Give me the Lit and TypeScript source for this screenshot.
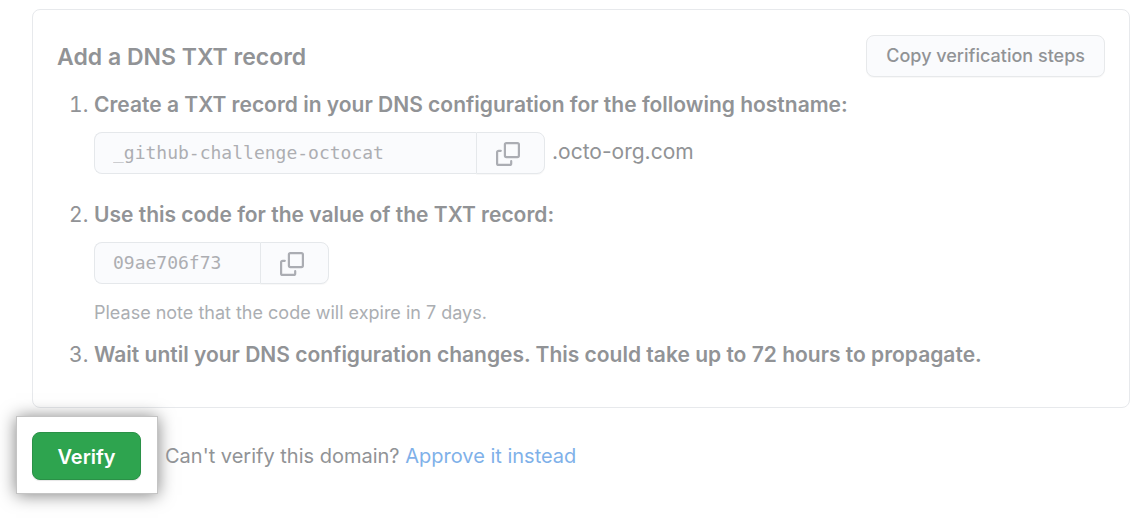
import { LitElement, html, css } from "lit";
import { customElement } from "lit/decorators.js";

const copyIcon = html`<svg class="icon" viewBox="0 0 24 24" fill="none" stroke="currentColor" stroke-width="2.2" stroke-linecap="round" stroke-linejoin="round" aria-hidden="true">
  <rect x="8.900" y="1.100" width="14" height="14" rx="1.500"></rect>
  <path d="M4.800 8.800H2.600A1.500 1.500 0 0 0 1.100 10.300v11.100a1.500 1.500 0 0 0 1.500 1.500h11.100a1.500 1.500 0 0 0 1.500-1.500V19.200"></path>
</svg>`;

@customElement("app-root")
export class AppRoot extends LitElement {
  static styles = css`
    :host {
      display: block;
      box-sizing: border-box;
      min-height: 100vh;
      padding: 9px 14px 24px 32px;
      background: #fff;
      color: #919396;
      font: 21px/32px Inter, "Liberation Sans", sans-serif;
    }
    * { box-sizing: border-box; }
    .card {
      border: 1px solid #e7e9ec;
      border-radius: 8px;
      padding: 25px 24px 36px 24px;
    }
    .head {
      display: flex;
      align-items: center;
      justify-content: space-between;
      margin-bottom: 12px;
    }
    .title { margin: 0; padding-top: 2px; font-size: 23px; font-weight: 600; line-height: 32px; }
    button { font: inherit; color: inherit; cursor: pointer; }
    .plain {
      height: 42px;
      padding: 0 19px;
      border: 1px solid #e7e9eb;
      border-radius: 8px;
      background: #fafbfd;
      box-shadow: 0 1px 1px rgba(0, 0, 0, 0.03);
      font-size: 18px;
      font-weight: 500;
    }
    .steps { margin: 0; padding: 0 0 0 37px; }
    .step + .step { margin-top: 25px; }
    .step + .step.close { margin-top: 10px; }
    .label { display: block; font-weight: 600; }
    .row { display: flex; align-items: center; gap: 7px; margin-top: 11px; }
    .suffix { padding-bottom: 2px; }
    .group { display: flex; width: 451px; height: 42px; }
    .group.short { width: 235px; }
    .field {
      flex: 1;
      min-width: 0;
      padding: 0 18px 2px;
      border: 1px solid #e5e8eb;
      border-right: 0;
      border-radius: 8px 0 0 8px;
      background: #fafbfd;
      color: #adaeb2;
      font: 18px "DejaVu Sans Mono", monospace;
    }
    .copy {
      display: grid;
      place-items: center;
      width: 69px;
      padding: 2px 6px 0 0;
      border: 1px solid #e5e8eb;
      border-radius: 0 8px 8px 0;
      background: #fafbfd;
      box-shadow: 0 1px 1px rgba(0, 0, 0, 0.03);
      color: #abadb3;
    }
    .icon { width: 24px; height: 24px; display: block; }
    .note { margin: 13px 0 0; font-size: 18px; line-height: 32px; color: #abaeb2; }
    .foot { display: flex; align-items: center; gap: 7px; margin: 8px 0 0 -16px; }
    .spot {
      padding: 15px 16px 13px 15px;
      border: 1px solid #c4c4c4;
      background: #fff;
      box-shadow: 0 1px 16px rgba(0, 0, 0, 0.5);
    }
    .verify {
      display: block;
      width: 109px;
      height: 48px;
      padding: 2px 0 0;
      border: 1px solid #2a9147;
      border-radius: 8px;
      background: #2ea44f;
      box-shadow: 0 1px 1px rgba(0, 0, 0, 0.1);
      color: #fff;
      font-size: 20px;
      font-weight: 600;
    }
    .text { margin: 0; padding-top: 2px; font-size: 20px; }
    .link { color: #7fb1e9; text-decoration: none; }
  `;

  render() {
    return html`
      <section class="card">
        <header class="head">
          <h2 class="title">Add a DNS TXT record</h2>
          <button class="plain" type="button">Copy verification steps</button>
        </header>
        <ol class="steps">
          <li class="step">
            <label class="label" for="host">Create a TXT record in your DNS configuration for the following hostname:</label>
            <div class="row">
              <div class="group">
                <input class="field" id="host" readonly value="_github-challenge-octocat" />
                <button class="copy" type="button" aria-label="Copy hostname">${copyIcon}</button>
              </div>
              <span class="suffix">.octo-org.com</span>
            </div>
          </li>
          <li class="step">
            <label class="label" for="code">Use this code for the value of the TXT record:</label>
            <div class="row">
              <div class="group short">
                <input class="field" id="code" readonly value="09ae706f73" />
                <button class="copy" type="button" aria-label="Copy code">${copyIcon}</button>
              </div>
            </div>
            <p class="note">Please note that the code will expire in 7 days.</p>
          </li>
          <li class="step close">
            <span class="label">Wait until your DNS configuration changes. This could take up to 72 hours to propagate.</span>
          </li>
        </ol>
      </section>
      <footer class="foot">
        <div class="spot"><button class="verify" type="button">Verify</button></div>
        <p class="text">Can't verify this domain? <a class="link" href="#approve">Approve it instead</a></p>
      </footer>
    `;
  }
}
